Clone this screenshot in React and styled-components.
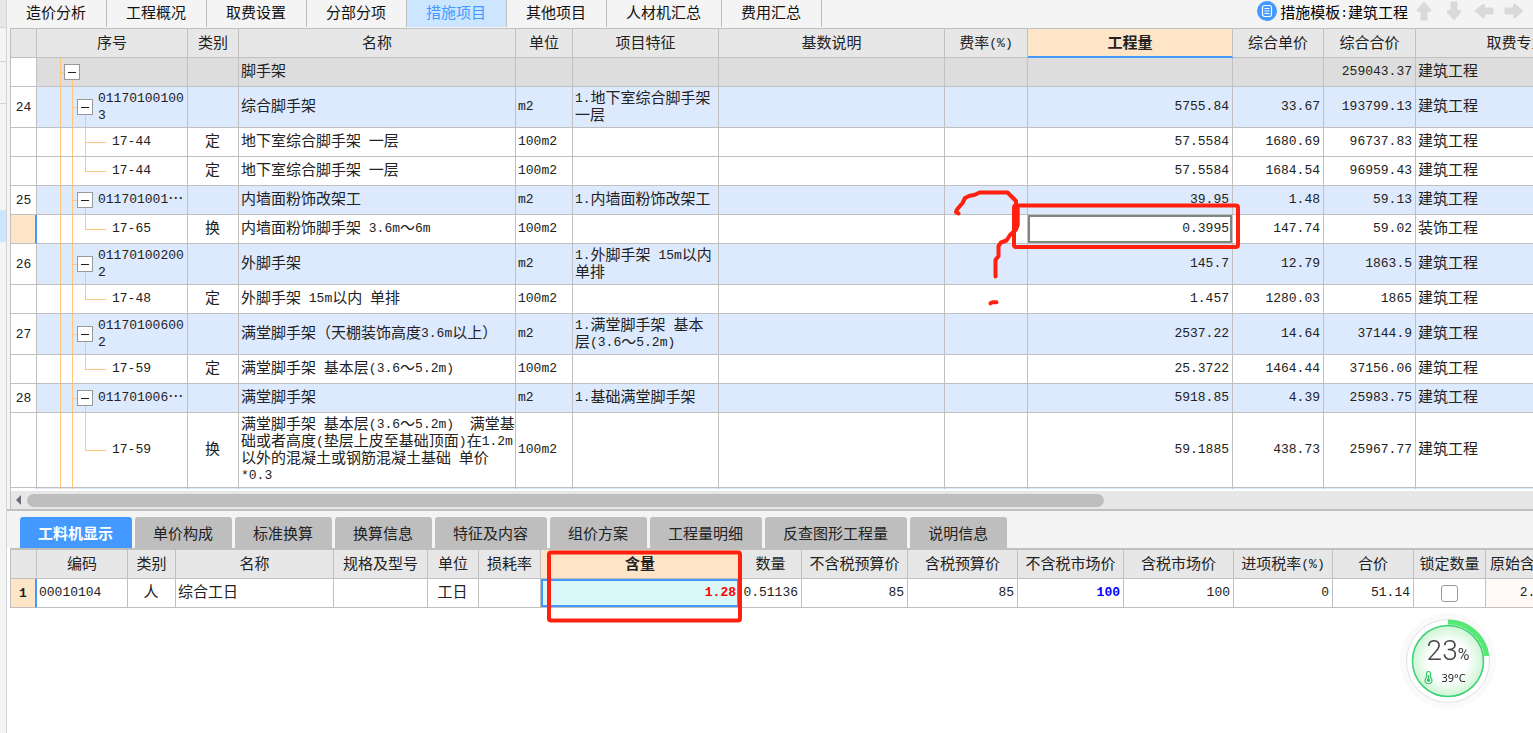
import React from "react";
import styled, { createGlobalStyle, css } from "styled-components";

const line = "#c0c0c0";
const blue = "#4499ff";
const peach = "#fee5c8";
const guide = "#ffc67c";
const red = "#ff2010";

const GlobalStyle = createGlobalStyle`
  * { box-sizing: border-box; }
  body {
    margin: 0;
    background: #fff;
    color: #222;
    font-family: "Noto Sans CJK SC", sans-serif;
    font-size: 15px;
    line-height: 17px;
    overflow: hidden;
  }
  button { font: inherit; border: 0; padding: 0; background: none; color: inherit; cursor: pointer; }
`;

const Shell = styled.div`
  position: relative;
  display: flex;
  min-height: 100vh;
  overflow: hidden;
`;

const Rail = styled.aside`
  flex: none;
  width: 7px;
  display: flex;
  flex-direction: column;
  background: #f4f4f4;
  border-right: 1px solid #d4d4d4;
`;

const RailItem = styled.div`
  height: ${(p) => p.$height}px;
  background: ${(p) => p.$fill || "#f4f4f4"};
  border-bottom: 1px solid ${(p) => (p.$rule ? "#d4d4d4" : "transparent")};
`;

const Main = styled.main`
  flex: 1;
  min-width: 0;
  display: flex;
  flex-direction: column;
`;

const TopBar = styled.header`
  display: flex;
  justify-content: space-between;
  height: 28px;
  background: #f4f4f4;
`;

const TopTabs = styled.nav`
  display: flex;
  height: 27px;
`;

const TopTab = styled.button`
  && { padding: 0 20px 4px 19px; }
  border-right: 1px solid ${line};
  background: ${(p) => (p.$active ? "#cce6ff" : "transparent")} !important;
  color: ${(p) => (p.$active ? blue : "#111")};
  white-space: nowrap;
`;

const Tools = styled.div`
  display: flex;
  align-items: center;
  gap: 6px;
  height: 22px;
  padding-right: 9px;
`;

const Arrows = styled.div`
  display: flex;
  gap: 10px;
`;

const TemplateButton = styled.button`
  display: flex;
  align-items: center;
  gap: 3px;
  color: #000;
  white-space: nowrap;
`;

const ArrowButton = styled.button`
  width: 20px;
  height: 20px;
  svg { display: block; }
`;

const Panel = styled.section`
  border-left: 1px solid ${line};
  border-top: ${(p) => p.$top || 0}px solid ${line};
  margin-left: 3px;
  overflow: hidden;
  background: #fff;
`;

const Gutter = styled.div`
  background: #f4f4f4;
`;

const ItemsPanel = styled(Panel)`
  height: 461px;
`;

const Grid = styled.table`
  table-layout: fixed;
  width: ${(p) => p.$width}px;
  border-collapse: separate;
  border-spacing: 0;
`;

const Row = styled.tr`
  height: ${(p) => p.$height || 29}px;
  background: ${(p) =>
    p.$kind === "root" ? "#dddddd" : p.$kind === "group" ? "#dde9fd" : "#fff"};
`;

const HeadCell = styled.th`
  padding: 0 0 3px;
  font-weight: ${(p) => (p.$active ? 700 : 400)};
  text-align: center;
  white-space: nowrap;
  overflow: hidden;
  background: ${(p) => (p.$active ? peach : "#e7e7e7")};
  border-right: 1px solid ${line};
  border-bottom: ${(p) => (p.$active && p.$marked ? `2px solid ${blue}` : `1px solid ${line}`)};
`;

const Cell = styled.td`
  padding: 0 3px 5px 2px;
  text-align: ${(p) => p.$align || "left"};
  white-space: pre;
  border-right: 1px solid ${line};
  border-bottom: 1px solid ${line};
  ${(p) => p.$focused && css`box-shadow: inset 0 0 0 2px #7f8783;`}
  ${(p) => p.$editing && css`
    background: #dbf8f8;
    color: #f00;
    font-weight: 700;
    box-shadow: inset 0 0 0 2px ${blue};
  `}
  ${(p) => p.$changed && css`color: #00f; font-weight: 700;`}
  ${(p) => p.$tint && css`background: #fffaf5;`}
`;

const NumberCell = styled(Cell)`
  padding: 0 0 3px;
  text-align: center;
  background: ${(p) => (p.$active ? peach : "#fff")};
  border-right: ${(p) => (p.$active ? `2px solid ${blue}` : `1px solid ${line}`)};
  font-weight: ${(p) => (p.$bold ? 700 : 400)};
`;

const ControlCell = styled(Cell)`
  padding: 0;
`;

const bar = (x, y, w, h) =>
  `linear-gradient(${guide}, ${guide}) ${x} ${y} / ${w} ${h} no-repeat`;
const outer = bar("23px", "0", "1px", "100%");
const middle = bar("35px", "0", "1px", "100%");
const guides = {
  root: [outer, bar("35px", "100%", "1px", "50%"), bar("23px", "50%", "4px", "1px")],
  group: [outer, middle, bar("48px", "100%", "1px", "50%"), bar("35px", "50%", "5px", "1px")],
  branch: [outer, middle, bar("48px", "0", "1px", "100%"), bar("48px", "50%", "21px", "1px")],
  leaf: [outer, middle, bar("48px", "0", "1px", "50%"), bar("48px", "50%", "21px", "1px")],
};
const indents = { root: 27, group: 40, branch: 75, leaf: 75 };

const TreeCell = styled(Cell)`
  padding: 0 0 0 ${(p) => indents[p.$kind]}px;
  background: ${(p) => guides[p.$kind].join(", ")};
`;

const TreeLabel = styled.div`
  display: flex;
  align-items: center;
  gap: 5px;
`;

const TreeCode = styled.span`
  padding-bottom: 5px;
`;

const Toggle = styled.button`
  flex: none;
  width: 16px;
  height: 16px;
  display: grid;
  place-items: center;
  && { background: #fff; border: 1px solid #999; }
  &::before { content: ""; width: 8px; height: 1px; background: #222; }
`;

const LatinText = styled.span`
  font-family: "Liberation Mono", monospace;
  font-size: 13px;
  line-height: 1;
  vertical-align: 1px;
`;

const ScrollTrack = styled.div`
  display: flex;
  align-items: center;
  gap: 6px;
  height: 18px;
  padding-left: 5px;
  margin-top: 2px;
  background: #e7e7e7;
`;

const ScrollThumb = styled.div`
  width: 71%;
  height: 13px;
  border-radius: 7px;
  background: #bebebe;
`;

const DetailTabs = styled.nav`
  display: flex;
  align-items: flex-end;
  gap: 3px;
  height: 39px;
  padding-left: 13px;
  background: #f4f4f4;
  border-top: 2px solid ${line};
`;

const DetailTab = styled.button`
  height: 31px;
  && { padding: 0 19px 1px 18px; }
  border-radius: 3px 3px 0 0;
  white-space: nowrap;
  background: ${(p) => (p.$active ? blue : "#bebebe")} !important;
  color: ${(p) => (p.$active ? "#fff" : "#222")};
  font-weight: ${(p) => (p.$active ? 700 : 400)};
`;

const LockBox = styled.input`
  appearance: none;
  display: block;
  width: 17px;
  height: 17px;
  margin: 0 auto;
  border: 1px solid #999;
  border-radius: 3px;
  background: #fff;
`;

const Markup = styled.svg`
  position: absolute;
  left: ${(p) => p.$x}px;
  top: ${(p) => p.$y}px;
  fill: none;
  stroke: ${red};
  stroke-width: 4;
  stroke-linecap: round;
  stroke-linejoin: round;
  pointer-events: none;
`;

const Monitor = styled.div`
  position: fixed;
  right: 36px;
  bottom: 23px;
  width: 98px;
  height: 98px;
  display: flex;
  flex-direction: column;
  align-items: center;
  padding-top: 25px;
  svg.dial { position: absolute; inset: 0; }
`;

const Load = styled.div`
  position: relative;
  display: flex;
  align-items: baseline;
  font-family: Roboto, sans-serif;
  font-weight: 300;
  font-size: 28px;
  line-height: 28px;
  color: #444;
  small { font-size: 16px; font-weight: 400; }
`;

const Temperature = styled.div`
  position: relative;
  display: flex;
  align-items: center;
  gap: 8px;
  margin-right: 6px;
  font-family: "Open Sans", sans-serif;
  font-size: 11px;
  color: #111;
`;

function Mixed({ children }) {
  return String(children ?? "")
    .split(/([\x20-\x7e]+)/)
    .map((part, i) => (i % 2 ? <LatinText key={i}>{part}</LatinText> : part));
}

const topTabs = ["造价分析", "工程概况", "取费设置", "分部分项", "措施项目", "其他项目", "人材机汇总", "费用汇总"];

const itemColumns = [
  ["", 26], ["序号", 151], ["类别", 51], ["名称", 277], ["单位", 57], ["项目特征", 146],
  ["基数说明", 226], ["费率(%)", 83], ["工程量", 205], ["综合单价", 91], ["综合合价", 92], ["取费专业", 202],
];

const items = [
  { kind: "root", name: "脚手架", total: "259043.37", major: "建筑工程" },
  { kind: "group", no: 24, code: "01170100100\n3", name: "综合脚手架", unit: "m2", feature: "1.地下室综合脚手架\n一层", qty: "5755.84", price: "33.67", total: "193799.13", major: "建筑工程", height: 41 },
  { kind: "branch", code: "17-44", type: "定", name: "地下室综合脚手架 一层", unit: "100m2", qty: "57.5584", price: "1680.69", total: "96737.83", major: "建筑工程" },
  { kind: "leaf", code: "17-44", type: "定", name: "地下室综合脚手架 一层", unit: "100m2", qty: "57.5584", price: "1684.54", total: "96959.43", major: "建筑工程" },
  { kind: "group", no: 25, code: "011701001…", name: "内墙面粉饰改架工", unit: "m2", feature: "1.内墙面粉饰改架工", qty: "39.95", price: "1.48", total: "59.13", major: "建筑工程" },
  { kind: "leaf", active: true, code: "17-65", type: "换", name: "内墙面粉饰脚手架 3.6m～6m", unit: "100m2", qty: "0.3995", price: "147.74", total: "59.02", major: "装饰工程" },
  { kind: "group", no: 26, code: "01170100200\n2", name: "外脚手架", unit: "m2", feature: "1.外脚手架 15m以内\n单排", qty: "145.7", price: "12.79", total: "1863.5", major: "建筑工程", height: 41 },
  { kind: "leaf", code: "17-48", type: "定", name: "外脚手架 15m以内 单排", unit: "100m2", qty: "1.457", price: "1280.03", total: "1865", major: "建筑工程" },
  { kind: "group", no: 27, code: "01170100600\n2", name: "满堂脚手架（天棚装饰高度3.6m以上）", unit: "m2", feature: "1.满堂脚手架 基本\n层(3.6～5.2m)", qty: "2537.22", price: "14.64", total: "37144.9", major: "建筑工程", height: 41 },
  { kind: "leaf", code: "17-59", type: "定", name: "满堂脚手架 基本层(3.6～5.2m)", unit: "100m2", qty: "25.3722", price: "1464.44", total: "37156.06", major: "建筑工程" },
  { kind: "group", no: 28, code: "011701006…", name: "满堂脚手架", unit: "m2", feature: "1.基础满堂脚手架", qty: "5918.85", price: "4.39", total: "25983.75", major: "建筑工程" },
  { kind: "leaf", code: "17-59", type: "换", name: "满堂脚手架 基本层(3.6～5.2m)  满堂基\n础或者高度(垫层上皮至基础顶面)在1.2m\n以外的混凝土或钢筋混凝土基础 单价\n*0.3", unit: "100m2", qty: "59.1885", price: "438.73", total: "25967.77", major: "建筑工程", height: 75 },
  { kind: "group" },
];

const detailTabs = ["工料机显示", "单价构成", "标准换算", "换算信息", "特征及内容", "组价方案", "工程量明细", "反查图形工程量", "说明信息"];

const detailColumns = [
  ["", 26], ["编码", 91], ["类别", 48], ["名称", 158], ["规格及型号", 94], ["单位", 51], ["损耗率", 62],
  ["含量", 199], ["数量", 62], ["不含税预算价", 106], ["含税预算价", 110], ["不含税市场价", 106],
  ["含税市场价", 110], ["进项税率(%)", 99], ["合价", 81], ["锁定数量", 72], ["原始含量", 69],
];

const sum = (columns) => columns.reduce((total, c) => total + c[1], 0);

function TableHead({ columns, active, marked }) {
  return (
    <>
      <colgroup>
        {columns.map(([label, width]) => <col key={label} style={{ width }} />)}
      </colgroup>
      <thead>
        <Row>
          {columns.map(([label]) => (
            <HeadCell key={label} scope="col" $active={label === active} $marked={marked}>
              <Mixed>{label}</Mixed>
            </HeadCell>
          ))}
        </Row>
      </thead>
    </>
  );
}

function ItemRow({ item }) {
  const expandable = item.kind === "root" || item.kind === "group";
  return (
    <Row $kind={item.kind} $height={item.height}>
      <NumberCell $active={item.active}><Mixed>{item.no}</Mixed></NumberCell>
      <TreeCell $kind={item.kind}>
        <TreeLabel>
          {expandable && <Toggle type="button" aria-label="折叠" />}
          <TreeCode><Mixed>{item.code}</Mixed></TreeCode>
        </TreeLabel>
      </TreeCell>
      <Cell $align="center">{item.type}</Cell>
      <Cell><Mixed>{item.name}</Mixed></Cell>
      <Cell><Mixed>{item.unit}</Mixed></Cell>
      <Cell><Mixed>{item.feature}</Mixed></Cell>
      <Cell />
      <Cell />
      <Cell $align="right" $focused={item.active}><Mixed>{item.qty}</Mixed></Cell>
      <Cell $align="right"><Mixed>{item.price}</Mixed></Cell>
      <Cell $align="right"><Mixed>{item.total}</Mixed></Cell>
      <Cell>{item.major}</Cell>
    </Row>
  );
}

function Arrow({ label, turn }) {
  return (
    <ArrowButton type="button" aria-label={label}>
      <svg width="20" height="20" viewBox="0 0 20 20">
        <path d="M10 0.5 L17 8.5 V11 H13.5 V19.5 H6.5 V11 H3 V8.5 Z" fill="#d9d9d9" transform={`rotate(${turn} 10 10)`} />
      </svg>
    </ArrowButton>
  );
}

export default function App() {
  return (
    <Shell>
      <GlobalStyle />
      <Rail>
        <RailItem $height={28} $fill="#e7e7e7" $rule />
        <RailItem $height={34} $rule />
        <RailItem $height={42} $rule />
        <RailItem $height={106} />
        <RailItem $height={32} $fill="#cce6ff" />
      </Rail>
      <Main>
        <TopBar>
          <TopTabs>
            {topTabs.map((label) => (
              <TopTab key={label} type="button" $active={label === "措施项目"}>{label}</TopTab>
            ))}
          </TopTabs>
          <Tools>
            <TemplateButton type="button">
              <svg width="20" height="20" viewBox="0 0 20 20">
                <circle cx="10" cy="10" r="10" fill={blue} />
                <rect x="5.5" y="4.5" width="9" height="11" rx="2" fill="none" stroke="#fff" strokeWidth="1.2" />
                <path d="M7.5 7.5 H12.5 M7.5 10 H12.5 M7.5 12.5 H12.5" stroke="#fff" strokeWidth="1" />
              </svg>
              <span><Mixed>措施模板:建筑工程</Mixed></span>
            </TemplateButton>
            <Arrows>
              <Arrow label="上移" turn={0} />
              <Arrow label="下移" turn={180} />
              <Arrow label="左移" turn={270} />
              <Arrow label="右移" turn={90} />
            </Arrows>
          </Tools>
        </TopBar>
        <Gutter>
          <ItemsPanel $top={1}>
            <Grid $width={sum(itemColumns)} aria-label="措施项目">
              <TableHead columns={itemColumns} active="工程量" marked />
              <tbody>
                {items.map((item, i) => <ItemRow key={i} item={item} />)}
              </tbody>
            </Grid>
          </ItemsPanel>
          <Panel as="div">
            <ScrollTrack>
              <svg width="5" height="10" viewBox="0 0 5 10"><path d="M5 0 V10 L0 5 Z" fill="#6b6b75" /></svg>
              <ScrollThumb />
            </ScrollTrack>
          </Panel>
        </Gutter>
        <DetailTabs>
          {detailTabs.map((label) => (
            <DetailTab key={label} type="button" $active={label === "工料机显示"}>{label}</DetailTab>
          ))}
        </DetailTabs>
        <Panel $top={2}>
          <Grid $width={sum(detailColumns)} aria-label="工料机显示">
            <TableHead columns={detailColumns} active="含量" />
            <tbody>
              <Row>
                <NumberCell $active $bold><Mixed>1</Mixed></NumberCell>
                <Cell><Mixed>00010104</Mixed></Cell>
                <Cell $align="center">人</Cell>
                <Cell>综合工日</Cell>
                <Cell />
                <Cell $align="center">工日</Cell>
                <Cell />
                <Cell $align="right" $editing><Mixed>1.28</Mixed></Cell>
                <Cell $align="right"><Mixed>0.51136</Mixed></Cell>
                <Cell $align="right"><Mixed>85</Mixed></Cell>
                <Cell $align="right"><Mixed>85</Mixed></Cell>
                <Cell $align="right" $changed><Mixed>100</Mixed></Cell>
                <Cell $align="right"><Mixed>100</Mixed></Cell>
                <Cell $align="right"><Mixed>0</Mixed></Cell>
                <Cell $align="right"><Mixed>51.14</Mixed></Cell>
                <ControlCell><LockBox type="checkbox" aria-label="锁定数量" /></ControlCell>
                <Cell $align="right" $tint><Mixed>2.56</Mixed></Cell>
              </Row>
            </tbody>
          </Grid>
        </Panel>
      </Main>

      <Markup $x={930} $y={170} width="330" height="150" viewBox="0 0 330 150">
        <rect x="84" y="35.5" width="224" height="41.5" rx="2" />
        <path d="M28.5 43.5 L26 42 L27 39.5 L32.5 33 L35 28 L39 26 L45 24.700 L49.500 22.500 H77.500 L86 31 V33.500 L87.700 38 V55 L86 59.500 L80 65 L76.500 70.500 L71 72.500 L68.500 76 V86 L65.500 90 V106.500" />
        <path d="M60.500 133.300 L62.500 132.300 H66.500" />
      </Markup>
      <Markup $x={546} $y={549} width="198" height="75" viewBox="0 0 198 75">
        <rect x="3" y="3.500" width="191" height="68" rx="2" />
      </Markup>

      <Monitor>
        <svg className="dial" width="98" height="98" viewBox="0 0 98 98">
          <defs>
            <radialGradient id="glow">
              <stop offset="0.55" stopColor="#fff" />
              <stop offset="1" stopColor="#cdf5d3" />
            </radialGradient>
          </defs>
          <circle cx="49" cy="49" r="48" fill="#fafafa" />
          <circle cx="49" cy="49" r="41.500" fill="#fff" stroke="#e2e2e2" />
          <path d="M49 10 A39 39 0 0 1 87.800 44" fill="none" stroke="#55e872" strokeWidth="5" />
          <circle cx="49" cy="49" r="35.500" fill="url(#glow)" stroke="#3ad074" strokeWidth="1.500" />
        </svg>
        <Load>23<small>%</small></Load>
        <Temperature>
          <svg width="9" height="13" viewBox="0 0 9 13">
            <path d="M2.500 6.500 V2.500 A2 2 0 0 1 6.500 2.500 V6.500 A3.500 3.500 0 1 1 2.500 6.500 Z" fill="#fff" stroke="#35c76c" strokeWidth="1.200" />
            <path d="M4.500 4 V9" stroke="#35c76c" strokeWidth="1.500" />
            <circle cx="4.500" cy="9.300" r="1.800" fill="#35c76c" />
          </svg>
          <span>39°C</span>
        </Temperature>
      </Monitor>
    </Shell>
  );
}
